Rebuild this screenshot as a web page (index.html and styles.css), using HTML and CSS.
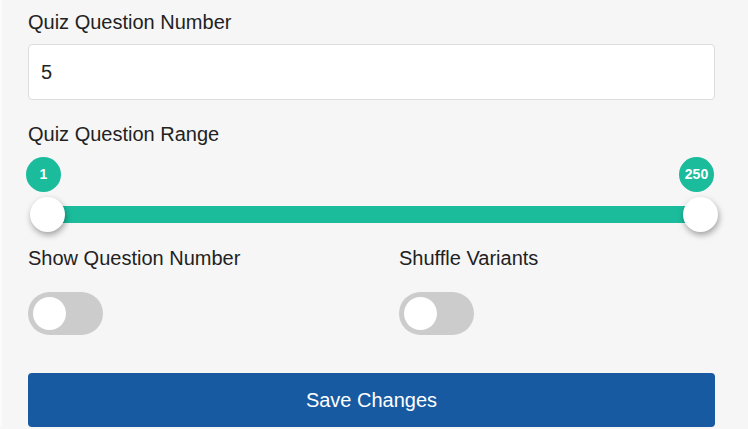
FILE: index.html
```html
<!DOCTYPE html>
<html lang="en">
<head>
<meta charset="utf-8">
<title>Quiz Settings</title>
<link rel="stylesheet" href="styles.css">
</head>
<body>
<form class="settings">
  <div class="field">
    <label class="label" for="qnum">Quiz Question Number</label>
    <input class="text-input" id="qnum" type="text" value="5">
  </div>
  <div class="field field-range">
    <div class="label">Quiz Question Range</div>
    <div class="slider">
      <span class="bubble bubble-min">1</span>
      <span class="bubble bubble-max">250</span>
      <div class="track"></div>
      <span class="thumb thumb-min"></span>
      <span class="thumb thumb-max"></span>
    </div>
  </div>
  <div class="toggles">
    <div class="toggle-field">
      <div class="label">Show Question Number</div>
      <span class="switch"><span class="knob"></span></span>
    </div>
    <div class="toggle-field">
      <div class="label">Shuffle Variants</div>
      <span class="switch"><span class="knob"></span></span>
    </div>
  </div>
  <button class="save" type="button">Save Changes</button>
</form>
</body>
</html>
```
FILE: styles.css
```css
* { box-sizing: border-box; }
html { background: #f6f6f6; }
body {
  margin: 0;
  padding: 11px 33px 0 26px;
  border-left: 2px solid #fbfbfb;
  background: #f6f6f6;
  font-family: "Liberation Sans", Arial, sans-serif;
  color: #222;
}
.settings { display: flex; flex-direction: column; }
.label {
  display: block;
  font-size: 20px;
  line-height: 23px;
  color: #222;
}
.field .label { margin-bottom: 10px; }
.text-input {
  display: block;
  width: 100%;
  height: 56px;
  margin: 0 0 23px;
  padding: 0 12px;
  border: 1px solid #dcdcdc;
  border-radius: 4px;
  background: #fff;
  font-family: "Liberation Sans", Arial, sans-serif;
  font-size: 20px;
  color: #222;
  outline: none;
}
.field-range .label { margin-bottom: 11px; }
.slider {
  position: relative;
  height: 75px;
  padding-top: 49px;
  margin: 0 -3px 15px 2px;
}
.track {
  height: 17px;
  margin: 0 17px;
  background: #1abc9c;
}
.bubble {
  position: absolute;
  top: 0;
  width: 35px;
  height: 35px;
  border-radius: 50%;
  background: #1abc9c;
  color: #fff;
  font-weight: bold;
  font-size: 14px;
  line-height: 35px;
  text-align: center;
}
.bubble-min { left: -4px; }
.bubble-max { right: 4px; }
.thumb {
  position: absolute;
  top: 40px;
  width: 35px;
  height: 35px;
  border-radius: 50%;
  background: #fff;
  box-shadow: 1px 3px 6px rgba(0, 0, 0, 0.35);
}
.thumb-min { left: 0; }
.thumb-max { right: 0; }
.toggles {
  display: grid;
  grid-template-columns: 1fr 1fr;
  column-gap: 55px;
}
.toggle-field .label { margin-bottom: 22px; }
.switch {
  display: block;
  width: 75px;
  height: 43px;
  border-radius: 22px;
  background: #cccccc;
  padding: 5px;
}
.knob {
  display: block;
  width: 33px;
  height: 33px;
  border-radius: 50%;
  background: #fff;
}
.save {
  margin-top: 38px;
  height: 54px;
  width: 100%;
  border: 0;
  border-radius: 4px;
  background: #175aa2;
  color: #fff;
  font-family: "Liberation Sans", Arial, sans-serif;
  font-size: 20px;
  cursor: pointer;
}
```
